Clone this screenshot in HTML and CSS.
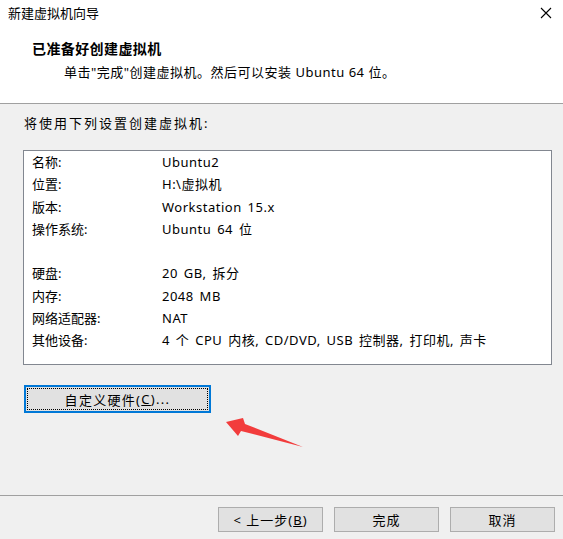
FILE: index.html
```html
<!DOCTYPE html>
<html lang="zh-CN">
<head>
<meta charset="utf-8">
<title>新建虚拟机向导</title>
<link rel="stylesheet" href="styles.css">
</head>
<body>
<div class="dialog">
  <div class="header">
    <div class="titlebar">
      <span class="title">新建虚拟机向导</span>
      <svg class="close" width="12" height="12" viewBox="0 0 12 12"><path d="M1 1L11 11M11 1L1 11" stroke="#000" stroke-width="1.1" fill="none"/></svg>
    </div>
    <div class="heading">已准备好创建虚拟机</div>
    <div class="subheading">单击"完成"创建虚拟机。然后可以安装 Ubuntu 64 位。</div>
  </div>
  <div class="content">
    <div class="intro">将使用下列设置创建虚拟机:</div>
    <div class="summary">
      <div class="row"><span class="label">名称:</span><span class="value">Ubuntu2</span></div>
      <div class="row"><span class="label">位置:</span><span class="value">H:\虚拟机</span></div>
      <div class="row"><span class="label">版本:</span><span class="value">Workstation 15.x</span></div>
      <div class="row"><span class="label">操作系统:</span><span class="value">Ubuntu 64 位</span></div>
      <div class="row blank"></div>
      <div class="row"><span class="label">硬盘:</span><span class="value">20 GB, 拆分</span></div>
      <div class="row"><span class="label">内存:</span><span class="value">2048 MB</span></div>
      <div class="row"><span class="label">网络适配器:</span><span class="value">NAT</span></div>
      <div class="row"><span class="label">其他设备:</span><span class="value">4 个 CPU 内核, CD/DVD, USB 控制器, 打印机, 声卡</span></div>
    </div>
    <div class="custom-wrap">
      <button class="btn custom"><span class="focus">自定义硬件(<u>C</u>)...</span></button>
    </div>
    <svg class="arrow" width="90" height="40" viewBox="0 0 90 40">
      <polygon points="1,8 18,4 20,10 78,33 16,17 13,22" fill="#f23c3c"/>
    </svg>
  </div>
  <div class="footer">
    <button class="btn">&lt; 上一步(<u>B</u>)</button>
    <button class="btn">完成</button>
    <button class="btn">取消</button>
  </div>
</div>
</body>
</html>
```

FILE: styles.css
```css
html, body {
  margin: 0;
  padding: 0;
}
body {
  width: 563px;
  height: 539px;
  background: #f0f0f0;
  font-family: "Noto Sans", "Noto Sans CJK SC", sans-serif;
  font-size: 12px;
  color: #000;
  overflow: hidden;
}
.dialog {
  width: 563px;
  height: 539px;
  display: flex;
  flex-direction: column;
}
.header {
  background: #fff;
  border-bottom: 1px solid #a0a0a0;
  box-sizing: border-box;
  height: 104px;
  flex: none;
}
.titlebar {
  height: 26px;
  display: flex;
  align-items: center;
  justify-content: space-between;
  padding: 0 11px 0 8px;
}
.title {
  font-size: 13px;
  line-height: 26px;
}
.heading {
  font-weight: bold;
  font-size: 14px;
  line-height: 22px;
  margin-top: 12px;
  padding-left: 32px;
  letter-spacing: 0.4px;
}
.subheading {
  font-size: 13px;
  line-height: 22px;
  margin-top: 1px;
  padding-left: 64px;
  letter-spacing: 0.5px;
}
.content {
  flex: 1;
  position: relative;
  padding: 0 11px 0 23px;
}
.intro {
  font-size: 13px;
  line-height: 20px;
  margin-top: 9px;
  padding-left: 1px;
  letter-spacing: 2px;
}
.summary {
  margin-top: 17px;
  background: #fff;
  border: 1px solid #828790;
  height: 215px;
  box-sizing: border-box;
  padding: 0 8px;
}
.row {
  display: flex;
  height: 22.25px;
  line-height: 22.25px;
  font-size: 13px;
}
.label {
  width: 130px;
  flex: none;
}
.value {
  letter-spacing: 0.5px;
  word-spacing: 2px;
}
.custom-wrap {
  margin-top: 20px;
  display: flex;
}
.btn {
  font-family: inherit;
  font-size: 13px;
  color: #000;
  background: #e1e1e1;
  border: 1px solid #adadad;
  padding: 0;
  margin: 0;
  width: 105px;
  height: 25px;
  display: flex;
  align-items: center;
  justify-content: center;
  letter-spacing: 1px;
}
.btn u {
  text-decoration: underline;
}
.custom {
  margin-left: 1px;
  width: 187px;
  height: 28px;
  border: 2px solid #0078d7;
  padding: 1px;
}
.focus {
  flex: 1;
  align-self: stretch;
  display: flex;
  align-items: center;
  justify-content: center;
  border: 1px dotted #000;
  letter-spacing: 1.3px;
}
.arrow {
  position: absolute;
  left: 225px;
  top: 310px;
}
.footer {
  flex: none;
  box-sizing: border-box;
  height: 44px;
  border-top: 1px solid #a0a0a0;
  display: flex;
  justify-content: flex-end;
  align-items: flex-start;
  gap: 11px;
  padding: 11px 8px 0 0;
}
```
